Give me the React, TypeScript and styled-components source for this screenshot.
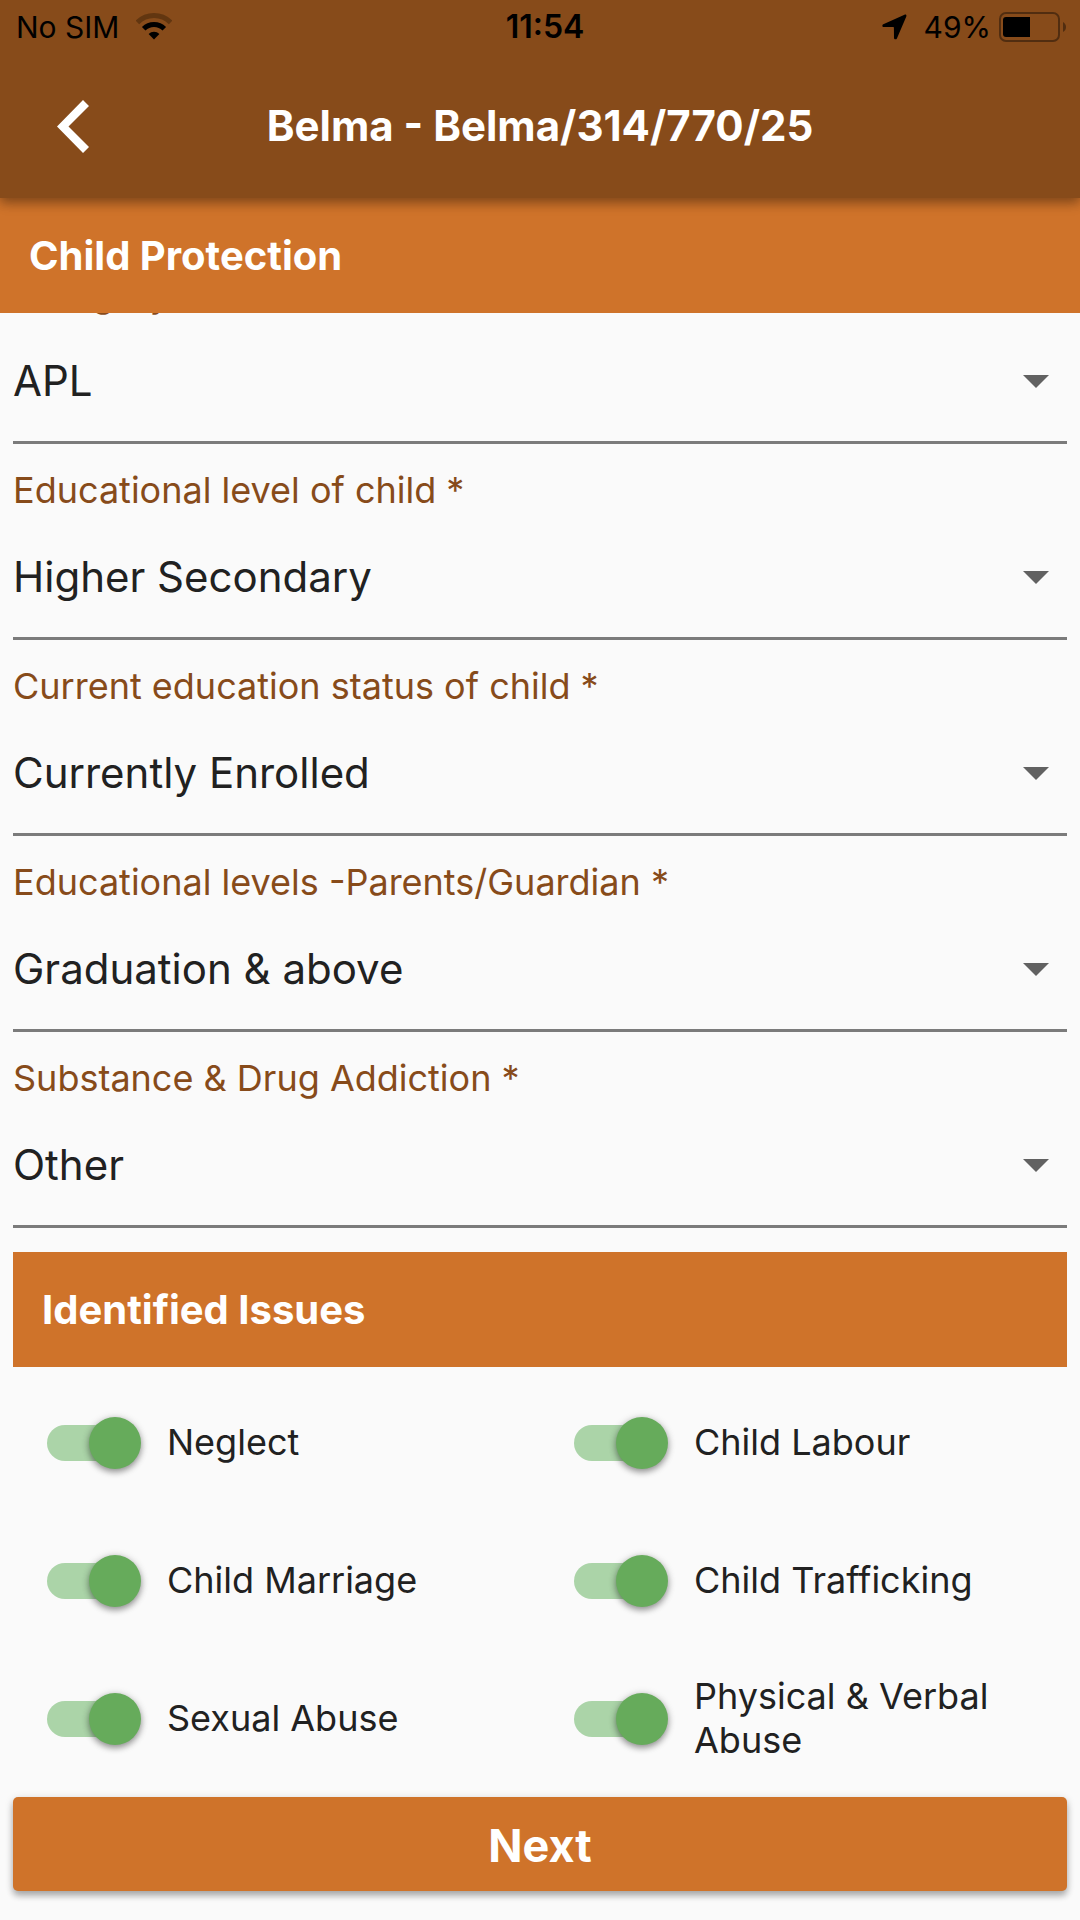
import React, { useLayoutEffect, useRef, useState } from "react";
import styled, { createGlobalStyle } from "styled-components";

const GlobalStyle = createGlobalStyle`
  *, *::before, *::after { box-sizing: border-box; }
  body {
    margin: 0;
    background: #fafafa;
    color: #212121;
    font-family: Inter, "Liberation Sans", sans-serif;
  }
  button, select { font-family: inherit; }
`;

const Screen = styled.div`
  display: flex;
  flex-direction: column;
  height: 100vh;
`;

const AppBar = styled.header`
  position: relative;
  z-index: 1;
  background: #874b1a;
  box-shadow: 0 5px 11px rgba(0, 0, 0, 0.3), 0 2px 12px rgba(0, 0, 0, 0.14);
`;

const StatusBar = styled.div`
  display: grid;
  grid-template-columns: 1fr auto 1fr;
  align-items: center;
  height: 54px;
  padding: 0 6px 0 16px;
  color: #000;
  font-size: 30px;
  line-height: 36px;
`;

const StatusGroup = styled.div<{ $end?: boolean; $gap: number }>`
  display: flex;
  align-items: center;
  justify-content: ${(p) => (p.$end ? "flex-end" : "flex-start")};
  gap: ${(p) => p.$gap}px;
`;

const Clock = styled.time`
  font-size: 32px;
  font-weight: 600;
`;

const NavBar = styled.div`
  display: grid;
  grid-template-columns: 146px 1fr 146px;
  align-items: center;
  height: 144px;
`;

const BackButton = styled.button`
  display: flex;
  align-items: center;
  justify-content: center;
  height: 100%;
  padding: 0;
  border: 0;
  background: none;
  cursor: pointer;
`;

const Title = styled.h1`
  margin: 0;
  color: #fff;
  font-size: 42px;
  font-weight: 700;
  line-height: 56px;
  text-align: center;
  white-space: nowrap;
`;

const Banner = styled.h2<{ $inset?: boolean }>`
  display: flex;
  flex: none;
  align-items: center;
  height: 115px;
  margin: ${(p) => (p.$inset ? "24px 0 7px" : "0")};
  padding: 0 29px;
  background: #cf732a;
  color: #fff;
  font-size: 40px;
  font-weight: 700;
  line-height: 48px;
`;

const Scroller = styled.main`
  flex: 1;
  min-height: 0;
  overflow-y: auto;
  padding: 0 13px;
  scrollbar-width: none;
`;

const Field = styled.div`
  display: flex;
  flex-direction: column;
  gap: 5px;
  height: 196px;
  padding-top: 24px;
  border-bottom: 3px solid #7b7b7b;
`;

const FieldLabel = styled.label`
  color: #874b1a;
  font-size: 36px;
  line-height: 44px;
`;

const SelectBox = styled.div`
  display: grid;
  flex: 1;
  align-items: center;

  > * { grid-area: 1 / 1; }
  > svg { justify-self: end; margin-right: 18px; pointer-events: none; }
`;

const Select = styled.select`
  width: 100%;
  height: 100%;
  padding: 0 0 2px;
  border: 0;
  outline: 0;
  appearance: none;
  background: transparent;
  color: #212121;
  font-size: 42px;
`;

const IssueGrid = styled.div`
  display: grid;
  grid-template-columns: 1fr 1fr;
  grid-auto-rows: 138px;
`;

const Issue = styled.label`
  display: flex;
  align-items: center;
  gap: 26px;
  padding: 0 34px;
`;

const IssueName = styled.span`
  padding-bottom: 2px;
  font-size: 36px;
  line-height: 44px;
`;

const Toggle = styled.input`
  display: flex;
  flex: none;
  align-items: center;
  width: 94px;
  height: 52px;
  margin: 0;
  appearance: none;
  cursor: pointer;

  &::before {
    content: "";
    flex: none;
    width: 86px;
    height: 36px;
    border-radius: 18px;
    background: #bdbdbd;
  }
  &::after {
    content: "";
    flex: none;
    width: 52px;
    height: 52px;
    margin-left: -86px;
    border-radius: 50%;
    background: #f1f1f1;
    box-shadow: 0 3px 6px rgba(0, 0, 0, 0.35), 0 1px 8px rgba(0, 0, 0, 0.16);
  }
  &:checked::before { background: #abd4a8; }
  &:checked::after { margin-left: -44px; background: #66ab5b; }
`;

const Footer = styled.footer`
  display: flex;
  padding: 9px 13px 29px;
`;

const NextButton = styled.button`
  flex: 1;
  height: 94px;
  padding: 2px 0 0;
  border: 0;
  border-radius: 5px;
  background: #cf732a;
  box-shadow: 0 5px 6px rgba(0, 0, 0, 0.24), 0 2px 8px rgba(0, 0, 0, 0.16);
  color: #fff;
  font-size: 45px;
  font-weight: 700;
  cursor: pointer;
`;

const WifiIcon = () => (
  <svg width="36" height="28" viewBox="0 0 36 28" fill="none" strokeWidth="5" aria-hidden="true">
    <path d="M1.400 9.400A23.500 23.500 0 0 1 34.600 9.400" stroke="#623610" />
    <path d="M7.700 15.700A14.500 14.500 0 0 1 28.300 15.700" stroke="#000" />
    <path d="M18 26.500l-5.400-5.600a7.800 7.800 0 0 1 10.800 0z" fill="#000" />
  </svg>
);

const LocationIcon = () => (
  <svg width="25" height="26" viewBox="0 0 25 26" aria-hidden="true">
    <path
      d="M22.500.8L1.300 10.300C-.2 11 .2 13 1.700 13h9.600c.4 0 .6.200.6.600l.1 10.200c0 1.700 2.100 2.200 2.900.6L24.200 2.700C24.900 1.200 23.900.2 22.500.8z"
      fill="#000"
    />
  </svg>
);

const BatteryIcon = () => (
  <svg width="75" height="30" viewBox="0 0 75 30" aria-hidden="true">
    <rect x="1" y="1" width="59" height="28" rx="6" fill="none" stroke="#512d10" strokeWidth="2" />
    <path d="M7 5h24v20H7a3 3 0 0 1-3-3V8a3 3 0 0 1 3-3z" fill="#000" />
    <path d="M64 10c4 2 4 8 0 10z" fill="#512d10" />
  </svg>
);

const BackIcon = () => (
  <svg width="32" height="53" viewBox="0 0 32 53" aria-hidden="true">
    <path d="M0 26.500L26 0l6 6-20.500 20.500L32 47l-6 6z" fill="#fff" />
  </svg>
);

const CaretIcon = () => (
  <svg width="26" height="13" viewBox="0 0 26 13" aria-hidden="true">
    <path d="M0 0h26L13 13z" fill="#616161" />
  </svg>
);

const fields = [
  { id: "category", label: "Category *", options: ["APL", "BPL"] },
  { id: "level", label: "Educational level of child *", options: ["Higher Secondary", "Secondary", "Primary"] },
  { id: "status", label: "Current education status of child *", options: ["Currently Enrolled", "Dropped Out"] },
  { id: "parents", label: "Educational levels -Parents/Guardian *", options: ["Graduation & above", "Secondary"] },
  { id: "substance", label: "Substance & Drug Addiction *", options: ["Other", "None"] },
];

const issues = [
  "Neglect",
  "Child Labour",
  "Child Marriage",
  "Child Trafficking",
  "Sexual Abuse",
  "Physical & Verbal Abuse",
];

function IssueSwitch({ name }: { name: string }) {
  const [on, setOn] = useState(true);
  return (
    <Issue>
      <Toggle type="checkbox" role="switch" checked={on} onChange={(e) => setOn(e.target.checked)} />
      <IssueName>{name}</IssueName>
    </Issue>
  );
}

export default function App() {
  const scroller = useRef<HTMLElement>(null);

  // The form opens at its last section.
  useLayoutEffect(() => {
    const el = scroller.current;
    if (el) el.scrollTop = el.scrollHeight;
  }, []);

  return (
    <>
      <GlobalStyle />
      <Screen>
        <AppBar>
          <StatusBar>
            <StatusGroup $gap={17}>
              <span>No SIM</span>
              <WifiIcon />
            </StatusGroup>
            <Clock>11:54</Clock>
            <StatusGroup $end $gap={8}>
              <StatusGroup $gap={17}>
                <LocationIcon />
                <span>49%</span>
              </StatusGroup>
              <BatteryIcon />
            </StatusGroup>
          </StatusBar>
          <NavBar>
            <BackButton type="button" aria-label="Back">
              <BackIcon />
            </BackButton>
            <Title>Belma - Belma/314/770/25</Title>
          </NavBar>
        </AppBar>
        <Banner>Child Protection</Banner>
        <Scroller ref={scroller}>
          {fields.map((f) => (
            <Field key={f.id}>
              <FieldLabel htmlFor={f.id}>{f.label}</FieldLabel>
              <SelectBox>
                <Select id={f.id}>
                  {f.options.map((o) => (
                    <option key={o}>{o}</option>
                  ))}
                </Select>
                <CaretIcon />
              </SelectBox>
            </Field>
          ))}
          <Banner $inset>Identified Issues</Banner>
          <IssueGrid>
            {issues.map((name) => (
              <IssueSwitch key={name} name={name} />
            ))}
          </IssueGrid>
        </Scroller>
        <Footer>
          <NextButton type="button">Next</NextButton>
        </Footer>
      </Screen>
    </>
  );
}
